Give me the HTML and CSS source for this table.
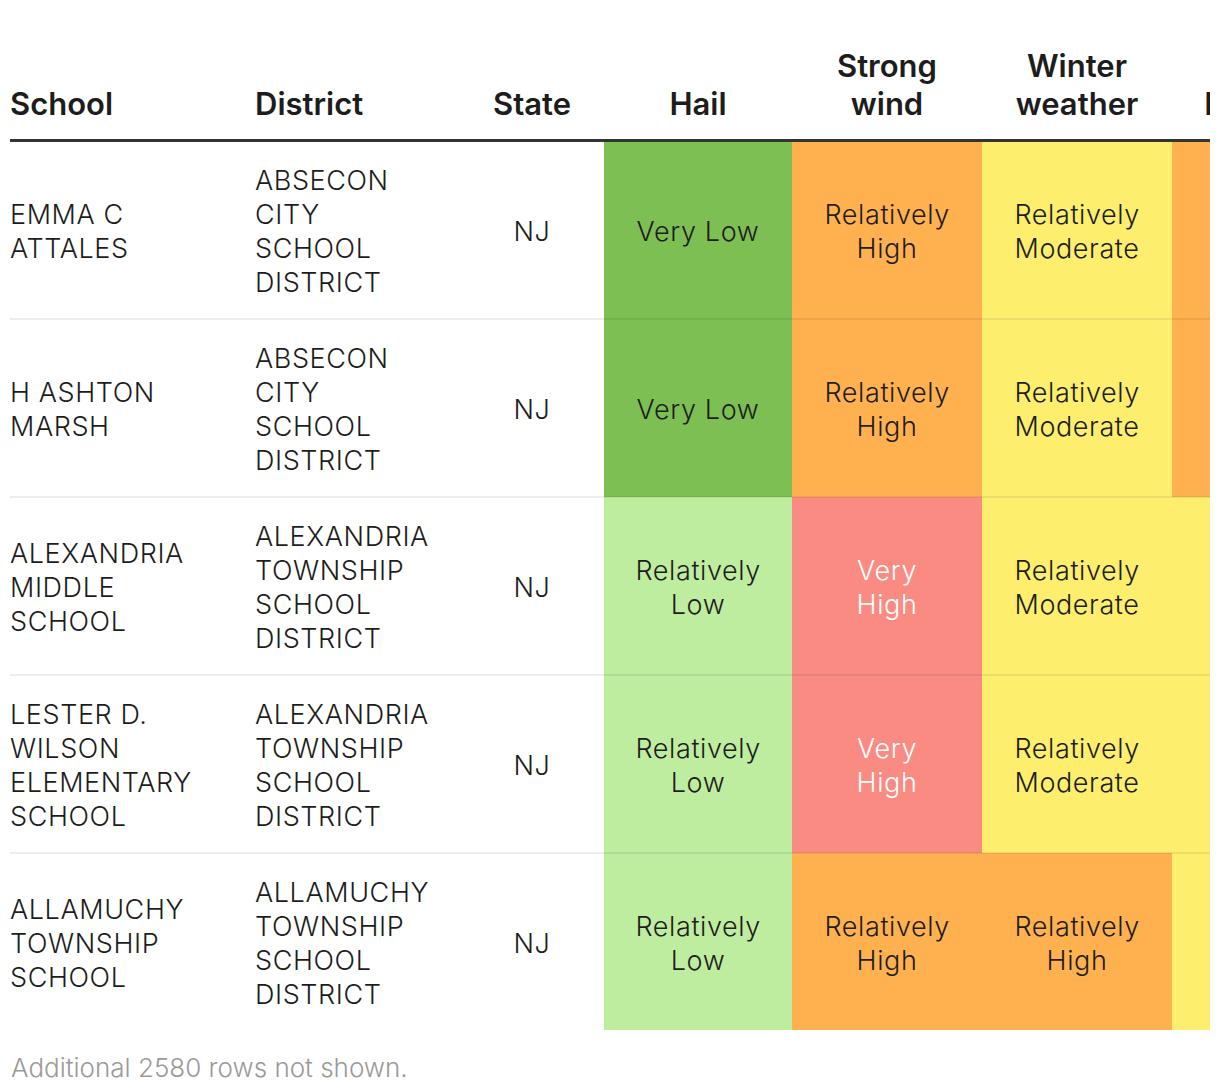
FILE: index.html
```html
<!DOCTYPE html>
<html lang="en">
<head>
<meta charset="utf-8">
<title>School hazard risk</title>
<link rel="stylesheet" href="styles.css">
</head>
<body>
<div class="chart">
  <div class="table-wrap">
    <table class="risk-table">
      <colgroup>
        <col class="c-school">
        <col class="c-district">
        <col class="c-state">
        <col class="c-hazard-h">
        <col class="c-hazard">
        <col class="c-hazard">
        <col class="c-hazard-last">
      </colgroup>
      <thead>
        <tr>
          <th class="left first">School</th>
          <th class="left">District</th>
          <th class="center">State</th>
          <th class="center">Hail</th>
          <th class="center">Strong wind</th>
          <th class="center">Winter weather</th>
          <th class="center">Lightning</th>
        </tr>
      </thead>
      <tbody>
        <tr>
          <td class="school">EMMA C ATTALES</td>
          <td class="district">ABSECON CITY SCHOOL DISTRICT</td>
          <td class="center">NJ</td>
          <td class="hz hail very-low">Very Low</td>
          <td class="hz rel-high">Relatively High</td>
          <td class="hz rel-moderate">Relatively Moderate</td>
          <td class="hz rel-high">Relatively High</td>
        </tr>
        <tr>
          <td class="school">H ASHTON MARSH</td>
          <td class="district">ABSECON CITY SCHOOL DISTRICT</td>
          <td class="center">NJ</td>
          <td class="hz hail very-low">Very Low</td>
          <td class="hz rel-high">Relatively High</td>
          <td class="hz rel-moderate">Relatively Moderate</td>
          <td class="hz rel-high">Relatively High</td>
        </tr>
        <tr>
          <td class="school">ALEXANDRIA MIDDLE SCHOOL</td>
          <td class="district">ALEXANDRIA TOWNSHIP SCHOOL DISTRICT</td>
          <td class="center">NJ</td>
          <td class="hz hail rel-low">Relatively Low</td>
          <td class="hz very-high">Very High</td>
          <td class="hz rel-moderate">Relatively Moderate</td>
          <td class="hz rel-moderate">Relatively Moderate</td>
        </tr>
        <tr>
          <td class="school">LESTER D. WILSON ELEMENTARY SCHOOL</td>
          <td class="district">ALEXANDRIA TOWNSHIP SCHOOL DISTRICT</td>
          <td class="center">NJ</td>
          <td class="hz hail rel-low">Relatively Low</td>
          <td class="hz very-high">Very High</td>
          <td class="hz rel-moderate">Relatively Moderate</td>
          <td class="hz rel-moderate">Relatively Moderate</td>
        </tr>
        <tr>
          <td class="school">ALLAMUCHY TOWNSHIP SCHOOL</td>
          <td class="district">ALLAMUCHY TOWNSHIP SCHOOL DISTRICT</td>
          <td class="center">NJ</td>
          <td class="hz hail rel-low">Relatively Low</td>
          <td class="hz rel-high">Relatively High</td>
          <td class="hz rel-high">Relatively High</td>
          <td class="hz rel-moderate">Relatively Moderate</td>
        </tr>
      </tbody>
    </table>
  </div>
  <p class="note">Additional 2580 rows not shown.</p>
</div>
</body>
</html>
```

FILE: styles.css
```css
html, body {
  margin: 0;
  padding: 0;
  background: #ffffff;
}

body {
  font-family: "Inter", "Roboto", "Liberation Sans", sans-serif;
  color: #1d1d1d;
}

.chart {
  padding: 36px 10px 0 10px;
}

.table-wrap {
  width: 1200px;
  overflow: hidden;
}

.risk-table {
  border-collapse: collapse;
  table-layout: fixed;
  width: 1367px;
}

.c-school { width: 235px; }
.c-district { width: 215px; }
.c-state { width: 144px; }
.c-hazard-h { width: 188px; }
.c-hazard { width: 190px; }
.c-hazard-last { width: 205px; }

.risk-table th {
  font-weight: 600;
  font-size: 31px;
  line-height: 38px;
  color: #1d1d1d;
  vertical-align: bottom;
  padding: 11px 10px 16px 10px;
  border-bottom: 3px solid #333333;
}

.risk-table td {
  font-weight: 300;
  font-size: 27px;
  line-height: 34px;
  letter-spacing: 0.6px;
  color: #1d1d1d;
  vertical-align: middle;
  padding: 22px 10px 18px 10px;
  border-bottom: 2px solid rgba(0, 0, 0, 0.07);
}

.risk-table tbody tr:last-child td {
  border-bottom: none;
}

.risk-table .left { text-align: left; }
.risk-table .center { text-align: center; }
.risk-table .first { padding-left: 0; }

.risk-table td.school {
  text-align: left;
  padding-left: 0;
  padding-right: 30px;
}

.risk-table td.district {
  text-align: left;
  padding-left: 10px;
  padding-right: 25px;
}

.risk-table td.hz {
  text-align: center;
  padding-left: 32.5px;
  padding-right: 32.5px;
}

.risk-table td.hz.hail {
  padding-left: 31.5px;
  padding-right: 31.5px;
}

.very-low { background: #7ebf53; }
.rel-low { background: #bfed9f; }
.rel-moderate { background: #fdee6e; }
.rel-high { background: #ffb14f; }
.risk-table td.very-high { background: #f98b83; color: #ffffff; }

.note {
  margin: 21px 0 0 1px;
  font-size: 26px;
  line-height: 34px;
  font-weight: 300;
  color: #9a9a9a;
}
```
